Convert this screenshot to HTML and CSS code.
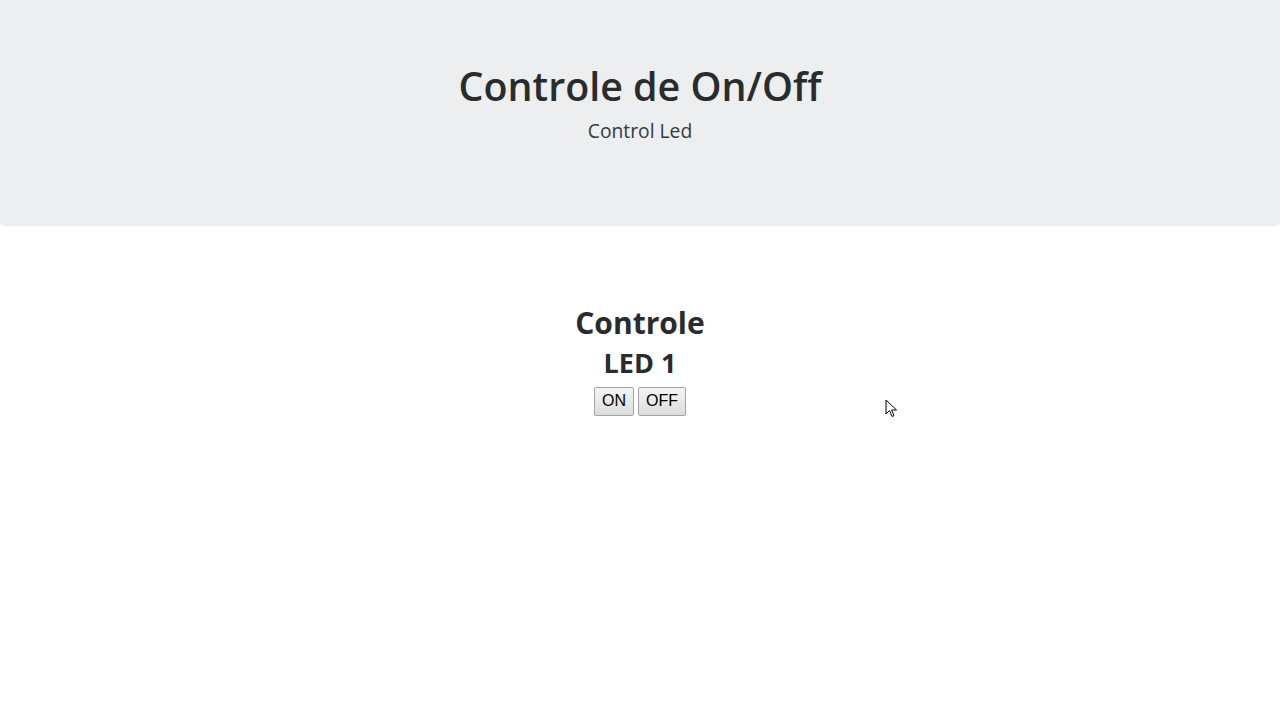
FILE: index.html
```html
<!DOCTYPE html>
<html lang="pt">
<head>
<meta charset="utf-8">
<title>Controle de On/Off</title>
<link rel="stylesheet" href="styles.css">
</head>
<body>
<header class="jumbotron">
  <h1 class="title">Controle de On/Off</h1>
  <p class="lead">Control Led</p>
</header>
<main class="content">
  <h2 class="section-title">Controle</h2>
  <h3 class="led-title">LED 1</h3>
  <div class="buttons">
    <button class="btn btn-on" type="button">ON</button>
    <button class="btn btn-off" type="button">OFF</button>
  </div>
</main>
<svg class="cursor" width="14" height="20" viewBox="0 0 14 20">
  <path d="M1 1 L1 15 L4.5 11.5 L7 17.5 L9 16.6 L6.6 11 L11.5 11 Z" fill="#fff" stroke="#000" stroke-width="1"/>
</svg>
</body>
</html>
```
FILE: styles.css
```css
html, body {
  margin: 0;
  padding: 0;
  background: #fff;
}
body {
  font-family: "Open Sans", "Noto Sans", sans-serif;
  color: #292b2c;
  position: relative;
  min-height: 720px;
}
.jumbotron {
  background: #eceeef;
  padding: 64px 32px;
  border-radius: 0 0 5px 5px;
  text-align: center;
  margin: 0 0 32px 0;
}
.title {
  margin: 0 0 8px 0;
  font-size: 39.4px;
  line-height: 44px;
  font-weight: 600;
}
.lead {
  margin: 0 0 16px 0;
  font-size: 19.3px;
  line-height: 30px;
  font-weight: 400;
  color: #333a40;
}
.content {
  text-align: center;
  padding-top: 46px;
}
.section-title {
  margin: 0;
  font-size: 30px;
  line-height: 38px;
  font-weight: 700;
}
.led-title {
  margin: 6px 0 9px 0;
  font-size: 27px;
  line-height: 30px;
  font-weight: 700;
}
.buttons {
  display: flex;
  justify-content: center;
  gap: 4px;
}
.btn {
  box-sizing: border-box;
  height: 29px;
  font-family: "Liberation Sans", Arial, sans-serif;
  font-size: 16px;
  line-height: 19px;
  color: #000;
  padding: 0 7px 2px 7px;
  border: 1px solid #a3a3a3;
  border-radius: 2px;
  background: linear-gradient(#f4f4f4, #dddddd);
  margin: 0;
}
.btn-on {
  width: 40px;
}
.btn-off {
  width: 48px;
}
.cursor {
  position: absolute;
  left: 885px;
  top: 399px;
}
```
